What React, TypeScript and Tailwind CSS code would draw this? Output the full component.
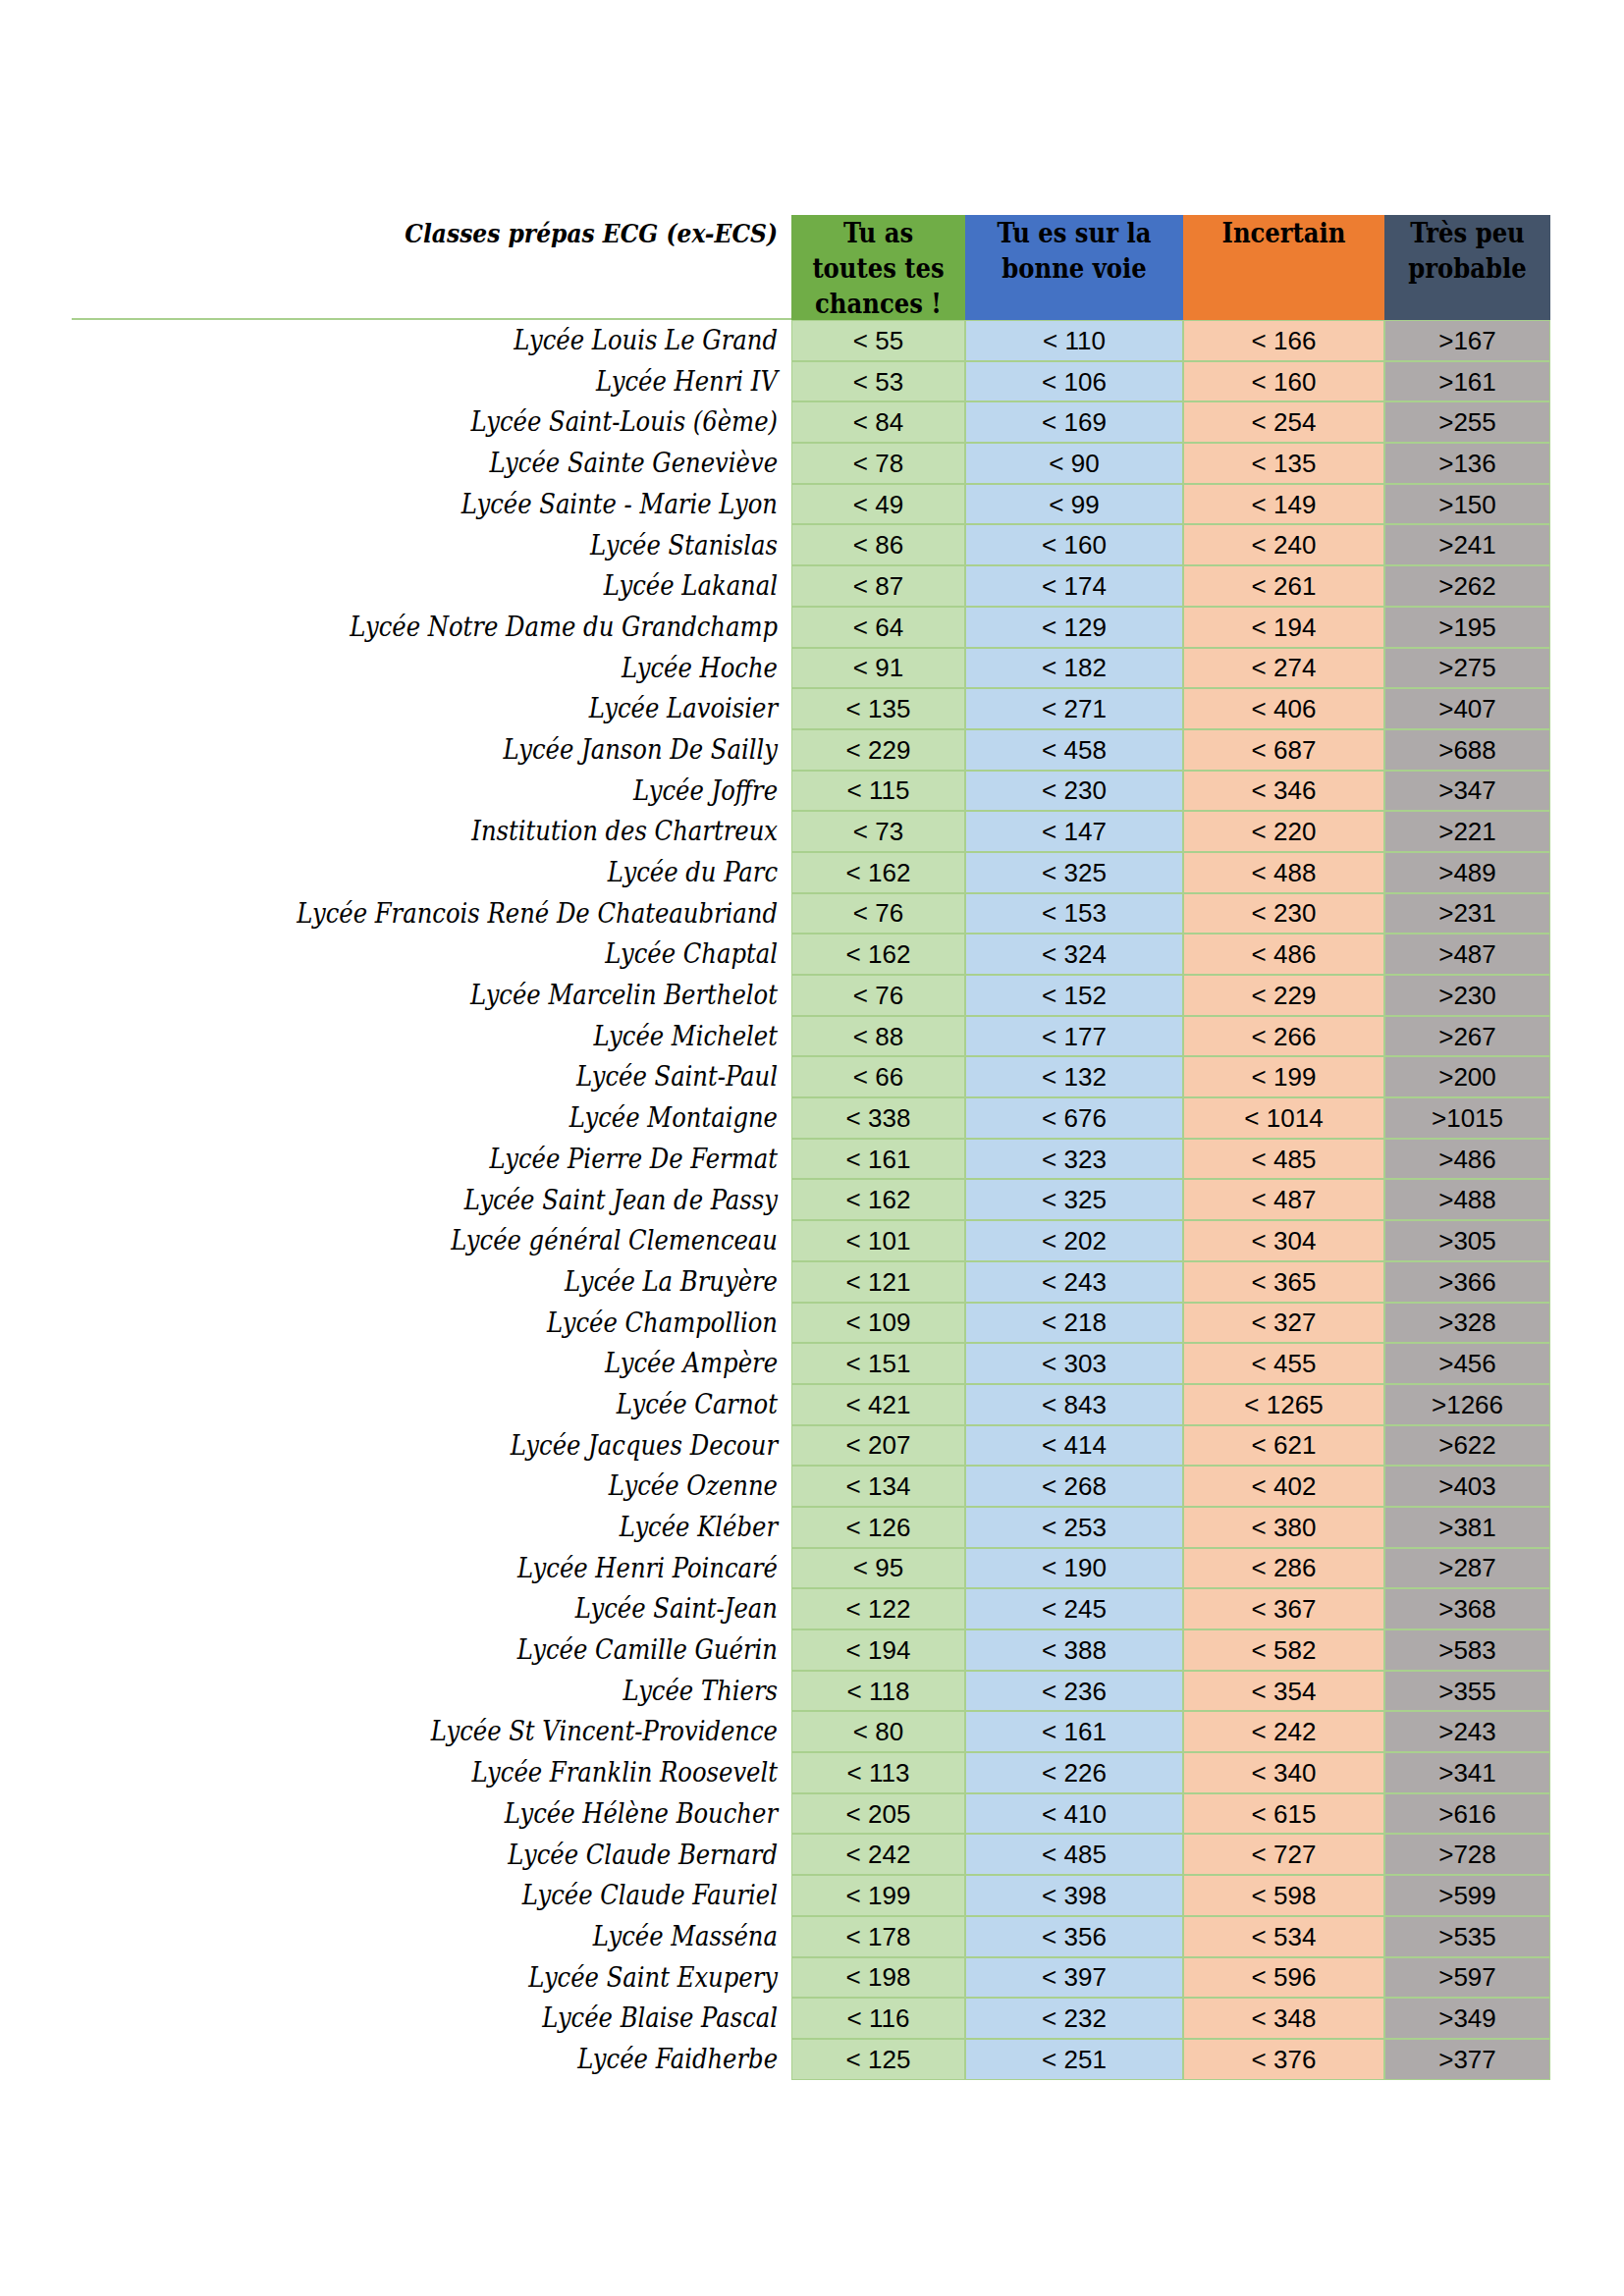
const rows: [string, number, number, number, number][] = [
  ["Lycée Louis Le Grand", 55, 110, 166, 167],
  ["Lycée Henri IV", 53, 106, 160, 161],
  ["Lycée Saint-Louis (6ème)", 84, 169, 254, 255],
  ["Lycée Sainte Geneviève", 78, 90, 135, 136],
  ["Lycée Sainte - Marie Lyon", 49, 99, 149, 150],
  ["Lycée Stanislas", 86, 160, 240, 241],
  ["Lycée Lakanal", 87, 174, 261, 262],
  ["Lycée Notre Dame du Grandchamp", 64, 129, 194, 195],
  ["Lycée Hoche", 91, 182, 274, 275],
  ["Lycée Lavoisier", 135, 271, 406, 407],
  ["Lycée Janson De Sailly", 229, 458, 687, 688],
  ["Lycée Joffre", 115, 230, 346, 347],
  ["Institution des Chartreux", 73, 147, 220, 221],
  ["Lycée du Parc", 162, 325, 488, 489],
  ["Lycée Francois René De Chateaubriand", 76, 153, 230, 231],
  ["Lycée Chaptal", 162, 324, 486, 487],
  ["Lycée Marcelin Berthelot", 76, 152, 229, 230],
  ["Lycée Michelet", 88, 177, 266, 267],
  ["Lycée Saint-Paul", 66, 132, 199, 200],
  ["Lycée Montaigne", 338, 676, 1014, 1015],
  ["Lycée Pierre De Fermat", 161, 323, 485, 486],
  ["Lycée Saint Jean de Passy", 162, 325, 487, 488],
  ["Lycée général Clemenceau", 101, 202, 304, 305],
  ["Lycée La Bruyère", 121, 243, 365, 366],
  ["Lycée Champollion", 109, 218, 327, 328],
  ["Lycée Ampère", 151, 303, 455, 456],
  ["Lycée Carnot", 421, 843, 1265, 1266],
  ["Lycée Jacques Decour", 207, 414, 621, 622],
  ["Lycée Ozenne", 134, 268, 402, 403],
  ["Lycée Kléber", 126, 253, 380, 381],
  ["Lycée Henri Poincaré", 95, 190, 286, 287],
  ["Lycée Saint-Jean", 122, 245, 367, 368],
  ["Lycée Camille Guérin", 194, 388, 582, 583],
  ["Lycée Thiers", 118, 236, 354, 355],
  ["Lycée St Vincent-Providence", 80, 161, 242, 243],
  ["Lycée Franklin Roosevelt", 113, 226, 340, 341],
  ["Lycée Hélène Boucher", 205, 410, 615, 616],
  ["Lycée Claude Bernard", 242, 485, 727, 728],
  ["Lycée Claude Fauriel", 199, 398, 598, 599],
  ["Lycée Masséna", 178, 356, 534, 535],
  ["Lycée Saint Exupery", 198, 397, 596, 597],
  ["Lycée Blaise Pascal", 116, 232, 348, 349],
  ["Lycée Faidherbe", 125, 251, 376, 377],
];

const serif = "font-['DejaVu_Serif_Condensed','DejaVu_Serif',serif] [font-stretch:condensed]";
const cell =
  "h-[41.7px] flex items-center justify-center pt-px border border-[#a9d08e] font-['Liberation_Sans',Arial,sans-serif] text-[26px] text-black";
const head = `${serif} h-[107px] pt-px text-center font-bold text-[27px] leading-[36px] text-black`;

const App = () => {
  return (
    <div className="w-[1654px] min-h-[2339px] bg-white pt-[219px] pl-[73px]">
      <div className="grid grid-cols-[733px_177px_222px_205px_169px]">
        {/* Header */}
        <div
          className={`${serif} h-[107px] pt-px border-b-2 border-[#a9d08e] pr-[14px] text-right italic font-bold text-[26px] leading-[36px] text-black`}
        >
          Classes prépas ECG (ex-ECS)
        </div>
        <div className={`${head} bg-[#70ad47]`}>
          Tu as
          <br />
          toutes tes
          <br />
          chances !
        </div>
        <div className={`${head} bg-[#4472c4]`}>
          Tu es sur la
          <br />
          bonne voie
        </div>
        <div className={`${head} bg-[#ed7d31]`}>Incertain</div>
        <div className={`${head} bg-[#44546a]`}>
          Très peu
          <br />
          probable
        </div>

        {/* Rows */}
        {rows.map(([name, a, b, c, d]) => (
          <div key={name} className="contents">
            <div
              className={`${serif} h-[41.7px] flex items-center justify-end pt-px pr-[14px] italic text-[27px] text-black`}
            >
              {name}
            </div>
            <div className={`${cell} bg-[#c5e0b4]`}>&lt; {a}</div>
            <div className={`${cell} bg-[#bdd7ee]`}>&lt; {b}</div>
            <div className={`${cell} bg-[#f8cbad]`}>&lt; {c}</div>
            <div className={`${cell} bg-[#aeaaaa]`}>&gt;{d}</div>
          </div>
        ))}
      </div>
    </div>
  );
};

export default App;
